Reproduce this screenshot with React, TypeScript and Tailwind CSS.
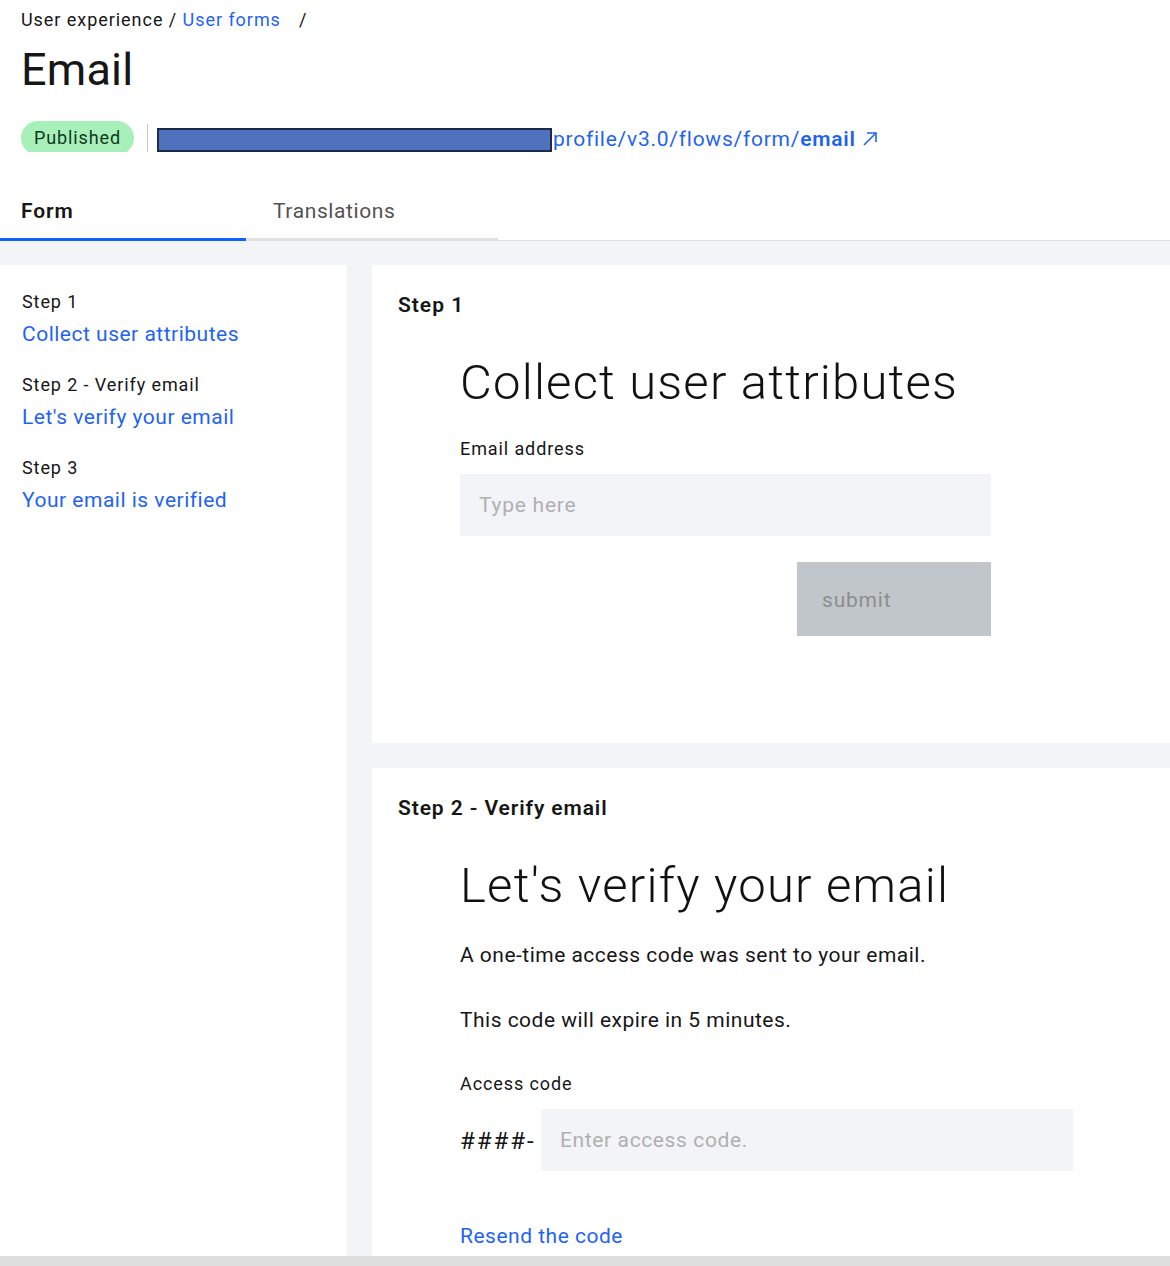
import React from "react";

const BLUE = "text-[#1f63f5]";

function ArrowUpRight() {
  return (
    <svg width="18" height="18" viewBox="0 0 18 18" fill="none" className="ml-[5px] inline-block">
      <path d="M3 15 L15 3" stroke="#1f63f5" strokeWidth="1.6" />
      <path d="M6 3 H15 V12" stroke="#1f63f5" strokeWidth="1.6" fill="none" />
    </svg>
  );
}

export default function App() {
  return (
    <div className="w-[1170px] h-[1266px] overflow-hidden bg-white text-[#161616] font-['Roboto',sans-serif] flex flex-col">
      {/* Header */}
      <div className="px-[21px] pt-[8px]">
        <div className="text-[18px] leading-[24px] tracking-[0.95px] whitespace-nowrap">
          <span>User experience / </span>
          <span className={BLUE}>User forms</span>
          <span className="ml-[18px]">/</span>
        </div>
        <h1 className="mt-[10px] text-[45px] leading-[56px] font-normal tracking-[0.2px]">Email</h1>
        <div className="mt-[23px] flex items-start h-[34px]">
          <div className="h-[31px] overflow-hidden">
            <div className="h-[34px] w-[113px] rounded-full bg-[#a7f0ba] text-[#0e3a1c] text-[18px] leading-[34px] flex justify-center tracking-[0.9px]">
              Published
            </div>
          </div>
          <div className="ml-[13px] mt-[3px] w-[1px] h-[28px] bg-[#c6c6c6]" />
          <div className="ml-[9px] mt-[7px] w-[395px] h-[24px] bg-[#5072be] border-2 border-[#1c2b4a]" />
          <div className={`ml-[1px] text-[21px] leading-[36px] ${BLUE} flex items-center tracking-[0.75px] whitespace-nowrap`}>
            <span>profile/v3.0/flows/form/</span>
            <span className="font-semibold">email</span>
            <ArrowUpRight />
          </div>
        </div>
      </div>

      {/* Tabs */}
      <div className="mt-[26px] flex border-b border-[#e0e0e0]">
        <div className="w-[246px] pl-[21px] pt-[18px] pb-[15px] border-b-[3px] border-[#0f62fe] text-[21px] leading-[24px] font-semibold tracking-[0.9px] -mb-[1px]">
          Form
        </div>
        <div className="ml-[1px] w-[251px] pl-[26px] pt-[18px] pb-[15px] border-b-[3px] border-[#e0e0e0] text-[21px] leading-[24px] text-[#525252] tracking-[0.6px] -mb-[1px]">
          Translations
        </div>
      </div>

      {/* Main */}
      <div className="bg-[#f2f4f8] pt-[24px] flex gap-[25px] h-[1015px]">
        <div className="w-[347px] bg-white pl-[22px] pt-[25px] flex flex-col gap-[25px]">
          {[
            ["Step 1", "Collect user attributes"],
            ["Step 2 - Verify email", "Let's verify your email"],
            ["Step 3", "Your email is verified"],
          ].map(([s, l]) => (
            <div key={s} className="flex flex-col gap-[6px]">
              <div className="text-[18px] leading-[24px] tracking-[0.9px]">{s}</div>
              <div className={`text-[21px] leading-[28px] tracking-[0.5px] ${BLUE}`}>{l}</div>
            </div>
          ))}
        </div>

        <div className="flex-1 flex flex-col gap-[25px]">
          {/* Panel 1 */}
          <div className="bg-white h-[478px] pl-[26px] pt-[28px]">
            <div className="text-[21px] leading-[24px] font-semibold tracking-[1px]">Step 1</div>
            <div className="ml-[62px] w-[531px] flex flex-col">
              <h2 className="mt-[38px] text-[49px] leading-[56px] font-light tracking-[1.2px] text-[#111] whitespace-nowrap">Collect user attributes</h2>
              <div className="mt-[26px] text-[18px] leading-[24px] tracking-[0.9px]">Email address</div>
              <div className="mt-[13px] h-[62px] bg-[#f2f4f8] pl-[19px] pt-[2px] flex items-center text-[21px] text-[#b0b0b0] tracking-[0.75px]">
                Type here
              </div>
              <div className="mt-[26px] self-end w-[194px] h-[74px] bg-[#c1c6ca] pl-[25px] pt-[3px] flex items-center text-[21px] text-[#8d8d8d] tracking-[0.8px]">
                submit
              </div>
            </div>
          </div>

          {/* Panel 2 */}
          <div className="bg-white flex-1 pl-[26px] pt-[28px]">
            <div className="text-[21px] leading-[24px] font-semibold tracking-[0.9px]">Step 2 - Verify email</div>
            <div className="ml-[62px] w-[613px] flex flex-col">
              <h2 className="mt-[38px] text-[49px] leading-[56px] font-light tracking-[1.25px] text-[#111] whitespace-nowrap">Let's verify your email</h2>
              <p className="mt-[27px] text-[21px] leading-[28px] tracking-[0.48px] whitespace-nowrap">A one-time access code was sent to your email.</p>
              <p className="mt-[37px] text-[21px] leading-[28px] tracking-[0.48px]">This code will expire in 5 minutes.</p>
              <div className="mt-[38px] text-[18px] leading-[24px] tracking-[0.9px]">Access code</div>
              <div className="mt-[13px] flex items-center">
                <span className="w-[81px] pt-[2px] text-[24px] tracking-[2px] whitespace-nowrap">####-</span>
                <div className="w-[532px] h-[62px] bg-[#f2f4f8] pl-[19px] pt-[2px] flex items-center text-[21px] text-[#b0b0b0] tracking-[0.62px]">
                  Enter access code.
                </div>
              </div>
              <div className={`mt-[51px] text-[21px] leading-[28px] tracking-[0.5px] ${BLUE}`}>Resend the code</div>
            </div>
          </div>
        </div>
      </div>
      <div className="h-[10px] bg-[#dedede]" />
    </div>
  );
}
